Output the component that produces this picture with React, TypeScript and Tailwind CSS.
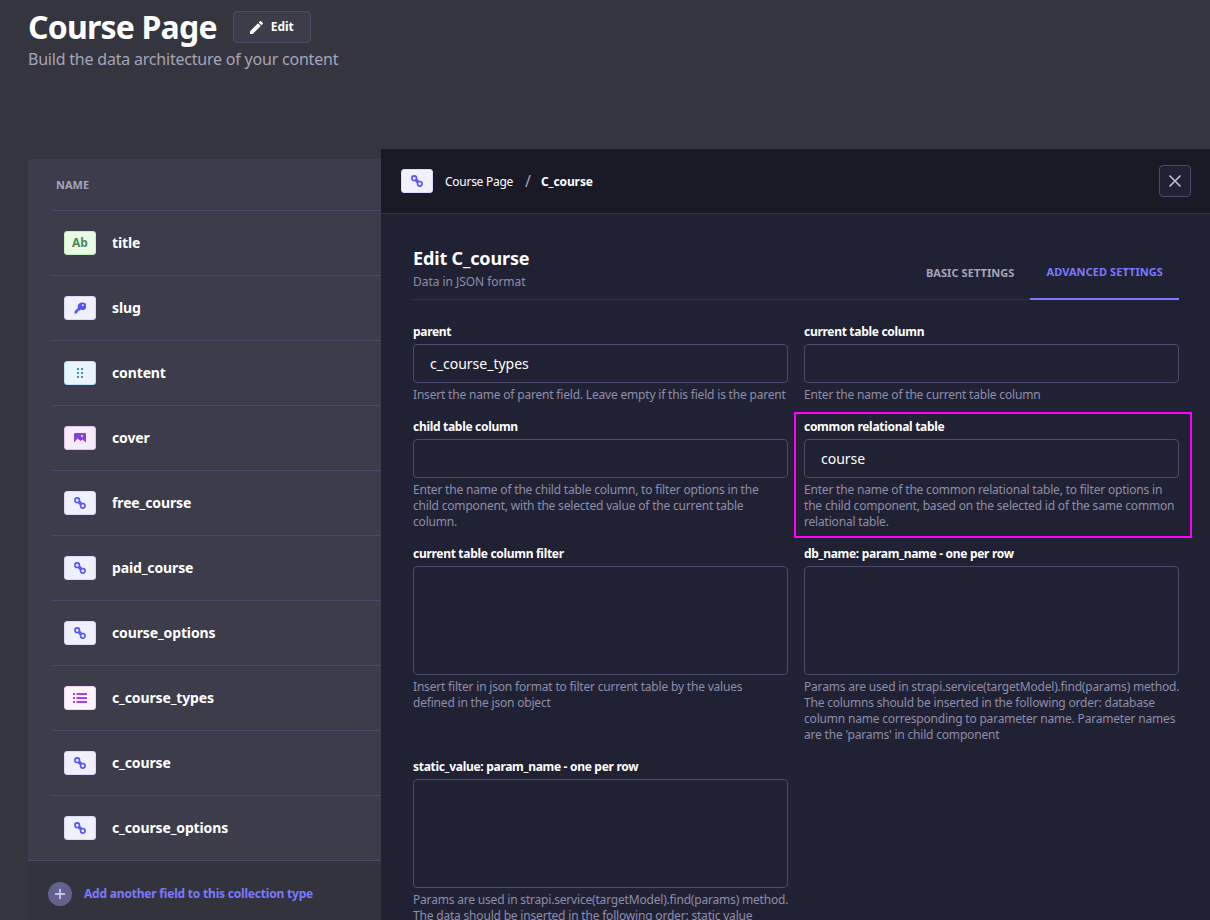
const LinkIcon = () => (
  <svg width="12" height="12" viewBox="0 0 12 12" fill="none" stroke="#5552ff" strokeWidth="1.6">
    <circle cx="3.2" cy="3.2" r="2.3" />
    <circle cx="8.8" cy="8.8" r="2.3" />
    <path d="M4.6 5.8 6.2 7.4M5.8 4.6 7.4 6.2" />
  </svg>
);

const KeyIcon = () => (
  <svg width="12" height="12" viewBox="0 0 12 12" fill="#5552ff">
    <path d="M7.6.6a3.8 3.8 0 0 0-3.5 5.2L.6 9.3v2.1h2.1l.6-.6V9.6h1.2V8.4h1.2l1-1a3.8 3.8 0 1 0 .9-6.8z" />
    <circle cx="8.8" cy="3.2" r="1" fill="#f0f0ff" />
  </svg>
);

const DotsIcon = () => (
  <svg width="8" height="12" viewBox="0 0 8 12" fill="#3a8fc4">
    <rect x="1" y="1" width="2" height="2" />
    <rect x="5" y="1" width="2" height="2" />
    <rect x="1" y="5" width="2" height="2" />
    <rect x="5" y="5" width="2" height="2" />
    <rect x="1" y="9" width="2" height="2" />
    <rect x="5" y="9" width="2" height="2" />
  </svg>
);

const ImageIcon = () => (
  <svg width="12" height="10" viewBox="0 0 12 10" fill="#8b3fdc">
    <path d="M0 1a1 1 0 0 1 1-1h10a1 1 0 0 1 1 1v8.6L8.4 6.4 6.6 8 3.6 5.4 0 9.6z" />
    <circle cx="8" cy="3" r="1" fill="#f6ecfc" />
  </svg>
);

const ListIcon = () => (
  <svg width="14" height="10" viewBox="0 0 14 10" fill="#a83ff0">
    <rect x="0" y="0" width="2" height="2" />
    <rect x="3.5" y="0" width="10.5" height="2" />
    <rect x="0" y="4" width="2" height="2" />
    <rect x="3.5" y="4" width="10.5" height="2" />
    <rect x="0" y="8" width="2" height="2" />
    <rect x="3.5" y="8" width="10.5" height="2" />
  </svg>
);

const TypeBadge = ({ kind }: { kind: string }) => {
  if (kind === 'text')
    return (
      <div className="w-8 h-6 rounded-[3px] bg-[#eafbe7] border border-[#c6f0c2] flex items-center justify-center text-[12px] font-bold text-[#4a8a58]">
        Ab
      </div>
    );
  if (kind === 'uid')
    return (
      <div className="w-8 h-6 rounded-[3px] bg-[#f0f0ff] border border-[#d9d8ff] flex items-center justify-center">
        <KeyIcon />
      </div>
    );
  if (kind === 'dz')
    return (
      <div className="w-8 h-6 rounded-[3px] bg-[#eaf5ff] border border-[#b8e1ff] flex items-center justify-center">
        <DotsIcon />
      </div>
    );
  if (kind === 'media')
    return (
      <div className="w-8 h-6 rounded-[3px] bg-[#f6ecfc] border border-[#e0c1f4] flex items-center justify-center">
        <ImageIcon />
      </div>
    );
  if (kind === 'enum')
    return (
      <div className="w-8 h-6 rounded-[3px] bg-[#fdf4ff] border border-[#f0d5fa] flex items-center justify-center">
        <ListIcon />
      </div>
    );
  return (
    <div className="w-8 h-6 rounded-[3px] bg-[#f0f0ff] border border-[#d9d8ff] flex items-center justify-center">
      <LinkIcon />
    </div>
  );
};

const fields = [
  { name: 'title', kind: 'text' },
  { name: 'slug', kind: 'uid' },
  { name: 'content', kind: 'dz' },
  { name: 'cover', kind: 'media' },
  { name: 'free_course', kind: 'rel' },
  { name: 'paid_course', kind: 'rel' },
  { name: 'course_options', kind: 'rel' },
  { name: 'c_course_types', kind: 'enum' },
  { name: 'c_course', kind: 'rel' },
  { name: 'c_course_options', kind: 'rel' },
];

const Field = ({
  label,
  value,
  hint,
  area,
}: {
  label: string;
  value?: string;
  hint: string;
  area?: boolean;
}) => (
  <div className="flex flex-col">
    <div className="h-4 text-[12px] leading-[18px] font-bold tracking-[-0.3px] text-white mb-[5px] whitespace-nowrap">{label}</div>
    {area ? (
      <div className="h-[109px] rounded-[4px] border border-[#4a4a6a] bg-[#212134]" />
    ) : (
      <div className="h-[39px] rounded-[4px] border border-[#4a4a6a] bg-[#212134] pl-4 flex items-center text-[14px] text-white">
        {value}
      </div>
    )}
    {/* line breaks in the hints are kept as written */}
    <div className="mt-1 text-[12px] leading-4 tracking-[-0.19px] text-[#8e8ea9] whitespace-pre">{hint}</div>
  </div>
);

export default function App() {
  return (
    <div className="relative h-[920px] w-full overflow-hidden bg-[#35353f] font-['Noto_Sans',sans-serif]">
      <div className="pl-7 pt-[11px]">
        <div className="flex items-center">
          <h1 className="text-[32px] leading-[32px] font-bold tracking-[-0.8px] text-white">Course Page</h1>
          <button className="ml-4 h-8 w-[78px] rounded-[4px] border border-[#4a4a6a] bg-[#3d3c4a] flex items-center justify-center gap-2 text-[12px] font-bold text-white">
            <svg width="13" height="13" viewBox="0 0 12 12" fill="#fff">
              <path d="M0 9.5V12h2.5l7.4-7.4-2.5-2.5zM11.8 2.7a.66.66 0 0 0 0-.94L10.24.2a.66.66 0 0 0-.94 0L8.1 1.4l2.5 2.5z" />
            </svg>
            Edit
          </button>
        </div>
        <p className="mt-[4px] text-[16px] leading-6 tracking-[-0.21px] text-[#a5a5ba]">Build the data architecture of your content</p>
      </div>

      <div className="ml-7 mt-[88px] rounded-t-[4px] bg-[#3d3c4a]">
        <div className="ml-6">
          <div className="h-[52px] flex items-center pl-1 pt-[2px] text-[11px] font-bold text-[#a5a5ba] border-b border-[#4a4a6a]">
            NAME
          </div>
          {fields.map((f) => (
            <div key={f.name} className="h-[65px] flex items-center gap-4 pl-3 border-b border-[#4a4a6a]">
              <TypeBadge kind={f.kind} />
              <span className="pb-[2px] text-[14px] font-bold tracking-[-0.13px] text-white">{f.name}</span>
            </div>
          ))}
        </div>
        <div className="h-[60px] bg-[#33333d] flex items-center pt-[6px] pl-5 border-t border-[#4a4a6a] -mt-px">
          <div className="w-6 h-6 rounded-full bg-[#62628c] flex items-center justify-center">
            <svg width="12" height="12" viewBox="0 0 12 12" fill="#c0c0e8">
              <rect x="5" y="1" width="2" height="10" />
              <rect x="1" y="5" width="10" height="2" />
            </svg>
          </div>
          <span className="ml-3 text-[12px] font-bold tracking-[-0.2px] text-[#7b79ff]">Add another field to this collection type</span>
        </div>
      </div>

      <div className="absolute left-[381px] top-[149px] right-0 bottom-0 rounded-tl-[4px] bg-[#212134]">
        <div className="h-[65px] bg-[#1a1a27] border-b border-[#32324d] flex items-center pl-5 pr-[19px]">
          <TypeBadge kind="rel" />
          <span className="ml-3 pt-px text-[12px] tracking-[-0.27px] text-white">Course Page</span>
          <span className="ml-3 text-[16px] text-[#a5a5ba]">/</span>
          <span className="ml-[10px] pt-px text-[12px] font-bold tracking-[-0.1px] text-white">C_course</span>
          <button className="ml-auto w-8 h-8 rounded-[4px] border border-[#4a4a6a] bg-[#212134] flex items-center justify-center">
            <svg width="14" height="14" viewBox="0 0 14 14" stroke="#c0c0cf" strokeWidth="1.6">
              <path d="M1.5 1.5l11 11M12.5 1.5l-11 11" />
            </svg>
          </button>
        </div>

        <div className="pl-8 pr-[31px] pt-8">
          <div className="h-[54px] flex justify-between border-b border-[#32324d]">
            <div>
              <h2 className="text-[18px] leading-[24px] font-bold tracking-[-0.15px] text-white">Edit C_course</h2>
              <p className="mt-1 text-[12px] leading-4 tracking-[-0.05px] text-[#8e8ea9]">Data in JSON format</p>
            </div>
            <div className="flex h-[54px]">
              <div className="px-4 flex items-center text-[11px] font-bold tracking-[0.07px] text-[#a5a5ba]">BASIC SETTINGS</div>
              <div className="px-4 flex items-center text-[11px] font-bold tracking-[0.07px] text-[#7b79ff] border-b-2 border-[#7b79ff]">
                ADVANCED SETTINGS
              </div>
            </div>
          </div>

          <div className="mt-[23px] grid grid-cols-[375px_375px] gap-x-4 gap-y-[15px]">
            <Field label="parent" value="c_course_types" hint="Insert the name of parent field. Leave empty if this field is the parent" />
            <Field label="current table column" hint="Enter the name of the current table column" />
            <Field
              label="child table column"
              hint={'Enter the name of the child table column, to filter options in the\nchild component, with the selected value of the current table\ncolumn.'}
            />
            <div className="relative">
              <Field
                label="common relational table"
                value="course"
                hint={'Enter the name of the common relational table, to filter options in\nthe child component, based on the selected id of the same common\nrelational table.'}
              />
              <div className="absolute -left-[10px] -top-[6px] -right-[13px] -bottom-[8px] border-2 border-[#ff00ff]" />
            </div>
            <Field
              area
              label="current table column filter"
              hint={'Insert filter in json format to filter current table by the values\ndefined in the json object'}
            />
            <Field
              area
              label="db_name: param_name - one per row"
              hint={"Params are used in strapi.service(targetModel).find(params) method.\nThe columns should be inserted in the following order: database\ncolumn name corresponding to parameter name. Parameter names\nare the 'params' in child component"}
            />
            <Field
              area
              label="static_value: param_name - one per row"
              hint={'Params are used in strapi.service(targetModel).find(params) method.\nThe data should be inserted in the following order: static value'}
            />
          </div>
        </div>
      </div>
    </div>
  );
}
